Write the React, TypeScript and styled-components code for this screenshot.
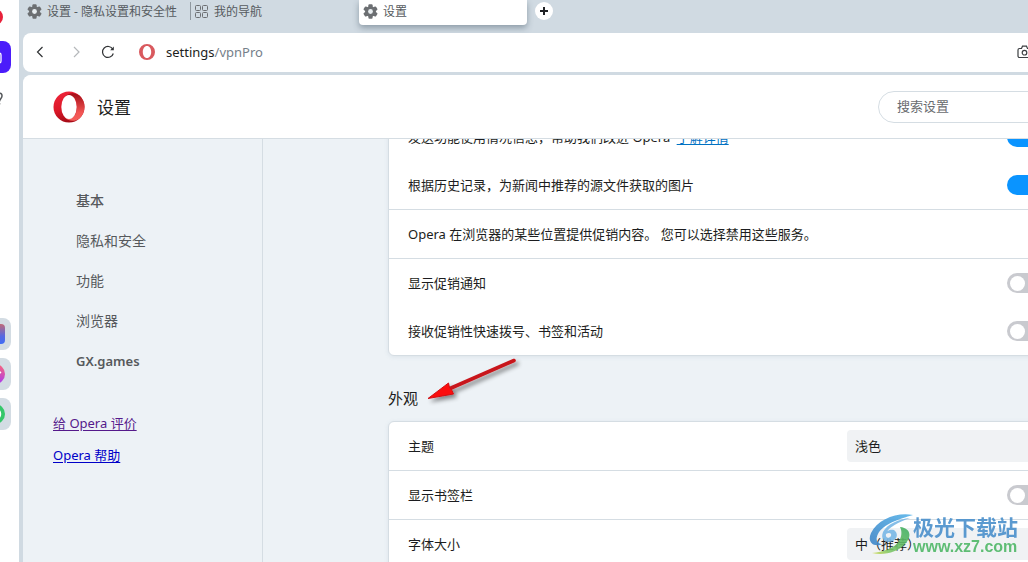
import React from "react";
import styled, { createGlobalStyle } from "styled-components";

const chrome = "#d0dae2";
const line = "#d5dde3";
const canvas = "#edf2f6";

const GlobalStyle = createGlobalStyle`
  *, *::before, *::after { box-sizing: border-box; }
  body {
    margin: 0;
    overflow: hidden;
    font-family: "Noto Sans", "Noto Sans CJK SC", sans-serif;
    font-size: 13px;
    line-height: 20px;
    color: #1c1d20;
  }
  button, input, select { font: inherit; color: inherit; }
  svg { display: block; flex: none; }
`;

const Shell = styled.div`
  display: flex;
  height: 100vh;
  background: ${chrome};
  overflow: hidden;
`;

const Rail = styled.nav`
  flex: none;
  width: 19px;
  padding: 1px 8px 0 0;
  background: #fff;
  overflow: hidden;
  display: flex;
  flex-direction: column;
  align-items: flex-end;
  gap: 8px;
`;

const RailApps = styled.div`
  display: flex;
  flex-direction: column;
  gap: 8px;
  margin-top: 197px;
`;

const RailButton = styled.button<{ $bg?: string }>`
  display: flex;
  align-items: center;
  justify-content: center;
  flex: none;
  width: 32px;
  height: 32px;
  padding: 0;
  border: 0;
  border-radius: 8px;
  background: ${(p) => p.$bg ?? "transparent"};
`;

const Frame = styled.div`
  flex: 1;
  min-width: 0;
  display: flex;
  flex-direction: column;
`;

const TabStrip = styled.div`
  flex: none;
  display: flex;
  height: 33px;
  padding-left: 4px;
`;

const Tab = styled.button<{ $active?: boolean }>`
  display: flex;
  align-items: center;
  flex: none;
  gap: 5px;
  width: 168px;
  height: 25px;
  padding: 0 4px 2px;
  border: 0;
  border-radius: 0 0 4px 4px;
  background: ${(p) => (p.$active ? "#fff" : "transparent")};
  box-shadow: ${(p) => (p.$active ? "0 3px 6px rgba(60, 80, 95, 0.45)" : "none")};
  color: #565b60;
  font-size: 12px;
  white-space: nowrap;
`;

const TabDivider = styled.span`
  flex: none;
  width: 1px;
  height: 18px;
  margin-top: 2px;
  margin-left: -1px;
  background: #8f989f;
`;

const NewTab = styled.button`
  display: flex;
  align-items: center;
  justify-content: center;
  width: 18px;
  height: 18px;
  margin: 2px 0 0 8px;
  padding: 0;
  border: 0;
  border-radius: 50%;
  background: #fff;
`;

const AddressBar = styled.div`
  flex: none;
  display: flex;
  align-items: center;
  height: 39px;
  margin: 0 -16px 3px 4px;
  padding: 0 11px 1px 8px;
  border-radius: 8px;
  background: #fff;
`;

const NavButtons = styled.div`
  display: flex;
  gap: 16px;
  margin-right: 16px;
`;

const IconButton = styled.button<{ $dim?: boolean }>`
  display: flex;
  align-items: center;
  justify-content: center;
  flex: none;
  width: 18px;
  height: 24px;
  padding: 0;
  border: 0;
  background: none;
  color: ${(p) => (p.$dim ? "#b5b8bb" : "#303235")};
`;

const Address = styled.div`
  flex: 1;
  padding-left: 11px;
  color: #1c1d20;
  span { color: #75808a; }
`;

const Page = styled.div`
  flex: 1;
  min-height: 0;
  display: flex;
  flex-direction: column;
  margin-left: 4px;
  border-radius: 8px 0 0 0;
  background: ${canvas};
  overflow: hidden;
`;

const Header = styled.header`
  flex: none;
  display: flex;
  align-items: center;
  height: 64px;
  padding-left: 30px;
  border-bottom: 1px solid ${line};
  background: #fff;
`;

const Title = styled.h1`
  flex: 1;
  margin: 0 0 0 12px;
  padding-top: 2px;
  font-size: 17px;
  line-height: 24px;
  font-weight: 400;
`;

const Search = styled.input`
  width: 196px;
  height: 32px;
  margin-right: -46px;
  padding: 0 18px 2px;
  border: 1px solid ${line};
  border-radius: 16px;
  background: #fff;
  outline: 0;
  &::placeholder { color: #6a6c70; opacity: 1; }
`;

const Body = styled.div`
  flex: 1;
  min-height: 0;
  display: flex;
`;

const Sidebar = styled.aside`
  flex: none;
  width: 240px;
  padding-top: 42px;
  border-right: 1px solid ${line};
`;

const NavList = styled.nav`
  display: flex;
  flex-direction: column;
  padding-left: 53px;
`;

const NavItem = styled.a<{ $latin?: boolean; $weight?: number }>`
  font-size: ${(p) => (p.$latin ? 13 : 14)}px;
  line-height: 40px;
  font-weight: ${(p) => p.$weight ?? 400};
  color: #56595c;
  text-decoration: none;
`;

const SideLinks = styled.div`
  display: flex;
  flex-direction: column;
  align-items: flex-start;
  margin-top: 26px;
  padding-left: 30px;
`;

const SideLink = styled.a<{ $visited?: boolean }>`
  line-height: 32px;
  color: ${(p) => (p.$visited ? "#551a8b" : "#0000c8")};
  text-underline-offset: 2px;
`;

const Viewport = styled.main`
  flex: 1;
  min-width: 0;
  overflow: hidden;
`;

const Scrolled = styled.div`
  margin: -27px -40px 0 125px;
`;

const Card = styled.section`
  border: 1px solid ${line};
  border-radius: 6px;
  background: #fff;
  box-shadow: 0 1px 4px rgba(120, 145, 165, 0.15);
`;

const Row = styled.div<{ $ruled?: boolean }>`
  display: flex;
  align-items: center;
  justify-content: space-between;
  height: ${(p) => (p.$ruled ? 49 : 48)}px;
  padding: 0 20px 0 19px;
  border-bottom: ${(p) => (p.$ruled ? `1px solid ${line}` : "0")};
  white-space: nowrap;
`;

const MoreLink = styled.a`
  margin-left: 3px;
  color: #0071c2;
  text-underline-offset: 2px;
`;

const SectionTitle = styled.h2`
  margin: 0;
  padding: 32px 0 12px;
  font-size: 15px;
  line-height: 21px;
  font-weight: 400;
`;

const Toggle = styled.input`
  appearance: none;
  flex: none;
  display: flex;
  align-items: center;
  width: 40px;
  height: 20px;
  margin: 0;
  padding: 0 3px;
  border-radius: 10px;
  background: #c9cacf;
  &::before {
    content: "";
    width: 15px;
    height: 15px;
    border-radius: 50%;
    background: #fff;
  }
  &:checked {
    justify-content: flex-end;
    background: #0a94ff;
  }
`;

const Select = styled.select`
  appearance: none;
  width: 200px;
  height: 32px;
  padding: 0 8px;
  border: 0;
  border-radius: 4px;
  background: #f0f2f4;
`;

const ArrowMark = styled.svg`
  position: absolute;
  left: 420px;
  top: 350px;
`;

const Watermark = styled.div`
  position: absolute;
  right: 10px;
  bottom: 6px;
  display: flex;
  align-items: center;
  opacity: 0.9;
`;

const WatermarkText = styled.div`
  display: flex;
  flex-direction: column;
`;

const WatermarkName = styled.span`
  font-family: "Noto Sans CJK SC", sans-serif;
  font-size: 21px;
  line-height: 24px;
  font-weight: 700;
  color: #4a90cc;
`;

const WatermarkSite = styled.span`
  font-family: "Liberation Sans", sans-serif;
  font-size: 16px;
  line-height: 18px;
  font-weight: 700;
  color: #50b868;
`;

const Gear = () => (
  <svg width="15" height="15" viewBox="0 0 15 15">
    <g fill="#6c6f72">
      {[0, 60, 120].map((a) => (
        <rect key={a} x="5.4" y="0.3" width="4.2" height="14.4" rx="1" transform={`rotate(${a} 7.5 7.5)`} />
      ))}
      <circle cx="7.5" cy="7.5" r="5.4" />
    </g>
    <circle cx="7.5" cy="7.5" r="2.4" fill="#e9eef1" />
  </svg>
);

const Grid = () => (
  <svg width="14" height="14" viewBox="0 0 14 14" fill="none" stroke="#6c6f72">
    {[1, 8].map((x) => [1, 8].map((y) => (
      <rect key={`${x}-${y}`} x={x - 0.5} y={y - 0.5} width="5" height="5" rx="1" />
    )))}
  </svg>
);

const OperaLogo = () => (
  <svg width="32" height="32" viewBox="0 0 32 32" aria-hidden="true">
    <defs>
      <linearGradient id="ring" x1="0" y1="0" x2="0.3" y2="1">
        <stop offset="0" stopColor="#f0263c" />
        <stop offset="0.6" stopColor="#dc1828" />
        <stop offset="1" stopColor="#a80c18" />
      </linearGradient>
      <linearGradient id="side" x1="0" y1="0" x2="0" y2="1">
        <stop offset="0" stopColor="#a20b15" />
        <stop offset="0.7" stopColor="#f25553" />
        <stop offset="1" stopColor="#f4605c" />
      </linearGradient>
    </defs>
    <circle cx="16" cy="16" r="15.500" fill="url(#ring)" />
    <path fill="url(#side)" d="M10.800 7C15 1 22 1 26.500 4.600A15.500 15.500 0 0 1 26.500 27.400C22 31 15 31 10.800 25C14 28.500 20 28 22.500 23C24.500 19 24.500 13 22.500 9C20 4 14 3.500 10.800 7z" />
    <ellipse cx="16" cy="16" rx="7.700" ry="12" fill="#fff" />
  </svg>
);

const ToggleRow = ({ id, label, on, ruled, link }: { id: string; label: string; on?: boolean; ruled?: boolean; link?: string }) => (
  <Row $ruled={ruled}>
    <span>
      <label htmlFor={id}>{label}</label>
      {link && <> <MoreLink href="#more">{link}</MoreLink></>}
    </span>
    <Toggle type="checkbox" id={id} defaultChecked={on} />
  </Row>
);

const SelectRow = ({ id, label, value, ruled }: { id: string; label: string; value: string; ruled?: boolean }) => (
  <Row $ruled={ruled}>
    <label htmlFor={id}>{label}</label>
    <Select id={id} defaultValue={value}>
      <option>{value}</option>
    </Select>
  </Row>
);

export default function App() {
  return (
    <>
      <GlobalStyle />
      <Shell>
        <Rail>
          <RailButton aria-label="Opera">
            <svg width="16" height="16" viewBox="0 0 16 16"><circle cx="8" cy="8" r="8" fill="#e8213a" /></svg>
          </RailButton>
          <RailButton $bg="#4b1cfa" aria-label="工作区">
            <svg width="14" height="14" viewBox="0 0 14 14" fill="none" stroke="#fff" strokeWidth="1.300"><rect x="1" y="3" width="12" height="10" rx="2" /></svg>
          </RailButton>
          <RailButton aria-label="工作区 2">
            <svg width="16" height="16" viewBox="0 0 16 16" fill="none" stroke="#55585b" strokeWidth="1.500"><path d="M10 6C10.500 3.500 15.200 3.500 15 7C15 9.500 12.500 10 12.500 12.500M12.500 14v1.600" /></svg>
          </RailButton>
          <RailApps>
            <RailButton $bg="#d3dce3" aria-label="Aria">
              <svg width="20" height="20" viewBox="0 0 20 20">
                <defs><linearGradient id="r1" x1="0" y1="0" x2="0" y2="1"><stop offset="0" stopColor="#c06a78" /><stop offset="0.6" stopColor="#5868e0" /><stop offset="1" stopColor="#3f6cf5" /></linearGradient></defs>
                <rect width="20" height="20" rx="4" fill="url(#r1)" />
              </svg>
            </RailButton>
            <RailButton $bg="#d3dce3" aria-label="Messenger">
              <svg width="20" height="20" viewBox="0 0 20 20">
                <defs><linearGradient id="r2" x1="1" y1="0" x2="0.700" y2="1"><stop offset="0" stopColor="#ff6a70" /><stop offset="1" stopColor="#a838f5" /></linearGradient></defs>
                <circle cx="10" cy="10" r="10" fill="url(#r2)" />
                <path d="M13 10l3-2" stroke="#fff" strokeWidth="1.600" fill="none" />
              </svg>
            </RailButton>
            <RailButton $bg="#d3dce3" aria-label="WhatsApp">
              <svg width="20" height="20" viewBox="0 0 20 20">
                <circle cx="10" cy="10" r="10" fill="#35c76a" />
                <circle cx="10" cy="10" r="5.600" fill="none" stroke="#fff" strokeWidth="1.300" />
              </svg>
            </RailButton>
          </RailApps>
        </Rail>

        <Frame>
          <TabStrip>
            <Tab><Gear />设置 - 隐私设置和安全性</Tab>
            <TabDivider />
            <Tab><Grid />我的导航</Tab>
            <Tab $active><Gear />设置</Tab>
            <NewTab aria-label="新标签页">
              <svg width="8" height="8" viewBox="0 0 8 8" stroke="#202225" strokeWidth="2"><path d="M4 0v8M0 4h8" /></svg>
            </NewTab>
          </TabStrip>

          <AddressBar>
            <NavButtons>
              <IconButton aria-label="后退">
                <svg width="12" height="12" viewBox="0 0 12 12" fill="none" stroke="currentColor" strokeWidth="1.200"><path d="M8.500 1L3.500 6l5 5" /></svg>
              </IconButton>
              <IconButton $dim aria-label="前进">
                <svg width="12" height="12" viewBox="0 0 12 12" fill="none" stroke="currentColor" strokeWidth="1.200"><path d="M6 1l5 5l-5 5" /></svg>
              </IconButton>
              <IconButton aria-label="刷新">
                <svg width="14" height="14" viewBox="0 0 14 14" fill="none" stroke="currentColor" strokeWidth="1.200"><path d="M12.300 8.500A5.500 5.500 0 1 1 11.800 4.200" /><path d="M12.800 1.600v3.600h-3.600z" fill="currentColor" stroke="none" /></svg>
              </IconButton>
            </NavButtons>
            <svg width="22" height="16" viewBox="0 0 22 16" aria-hidden="true">
              <path fill="#d9595e" fillRule="evenodd" d="M14 0a8 8 0 1 0 0 16a8 8 0 1 0 0-16zM14 2c2.500 0 4.200 2.700 4.200 6s-1.700 6-4.200 6s-4.200-2.700-4.200-6s1.700-6 4.200-6z" />
            </svg>
            <Address>settings<span>/vpnPro</span></Address>
            <svg width="16" height="14" viewBox="0 0 16 14" fill="none" stroke="#3c3f42" strokeWidth="1.200">
              <path d="M2.500 3.500h2l1-2.300h4l1 2.300h2a1.500 1.500 0 0 1 1.500 1.500v6a1.500 1.500 0 0 1-1.500 1.500h-10A1.500 1.500 0 0 1 1 11V5a1.500 1.500 0 0 1 1.500-1.500z" />
              <circle cx="7.500" cy="7.700" r="2.300" />
            </svg>
          </AddressBar>

          <Page>
            <Header>
              <OperaLogo />
              <Title>设置</Title>
              <Search type="search" placeholder="搜索设置" aria-label="搜索设置" />
            </Header>
            <Body>
              <Sidebar>
                <NavList>
                  <NavItem href="#basic" $weight={500}>基本</NavItem>
                  <NavItem href="#privacy">隐私和安全</NavItem>
                  <NavItem href="#features">功能</NavItem>
                  <NavItem href="#browser">浏览器</NavItem>
                  <NavItem href="#gx" $latin $weight={600}>GX.games</NavItem>
                </NavList>
                <SideLinks>
                  <SideLink href="#rate" $visited>给 Opera 评价</SideLink>
                  <SideLink href="#help">Opera 帮助</SideLink>
                </SideLinks>
              </Sidebar>
              <Viewport>
                <Scrolled>
                  <Card>
                    <ToggleRow id="usage" label="发送功能使用情况信息，帮助我们改进 Opera" link="了解详情" on />
                    <ToggleRow id="news" label="根据历史记录，为新闻中推荐的源文件获取的图片" on ruled />
                    <Row $ruled>Opera 在浏览器的某些位置提供促销内容。 您可以选择禁用这些服务。</Row>
                    <ToggleRow id="promo" label="显示促销通知" />
                    <ToggleRow id="dials" label="接收促销性快速拨号、书签和活动" />
                  </Card>
                  <SectionTitle>外观</SectionTitle>
                  <Card>
                    <SelectRow id="theme" label="主题" value="浅色" ruled />
                    <ToggleRow id="bookmarks" label="显示书签栏" ruled />
                    <SelectRow id="fontsize" label="字体大小" value="中（推荐）" ruled />
                  </Card>
                </Scrolled>
              </Viewport>
            </Body>
          </Page>
        </Frame>
      </Shell>

      <ArrowMark width="104" height="62" viewBox="0 0 104 62" aria-hidden="true">
        <defs>
          <filter id="drop" x="-20%" y="-20%" width="140%" height="150%">
            <feDropShadow dx="3" dy="3" stdDeviation="2" floodColor="#000" floodOpacity="0.45" />
          </filter>
        </defs>
        <g filter="url(#drop)">
          <path d="M94 10.500L30 38.500" stroke="#c8161b" strokeWidth="3.600" strokeLinecap="round" />
          <path d="M8 48.500L28.500 33L29.500 37.500L32 40.500L33.500 44z" fill="#fb0808" stroke="#d01216" strokeWidth="1" strokeLinejoin="round" />
        </g>
      </ArrowMark>

      <Watermark>
        <svg width="45" height="42" viewBox="0 0 45 42" aria-hidden="true">
          <defs>
            <linearGradient id="wb" x1="1" y1="0" x2="0" y2="1"><stop offset="0" stopColor="#58b4ea" /><stop offset="1" stopColor="#3d84c6" /></linearGradient>
            <linearGradient id="wg" x1="1" y1="0" x2="0" y2="1"><stop offset="0" stopColor="#3fae62" /><stop offset="0.700" stopColor="#7cc66a" /><stop offset="1" stopColor="#d5dc5a" /></linearGradient>
          </defs>
          <path fill="url(#wb)" d="M45 1C29-2 10 5 3 19C-1 28 5 34 15 30C9 30 7 26 10 20C15 10 31 5 45 1z" />
          <path fill="#79b8e6" d="M42 4C31 5 19 10 15 18C12 26 18 30 25 27C30 24 30 19 26 16C22 15 18 17 18 20C21 18 24 19 23 22C21 25 17 24 18 20C20 13 31 8 42 4z" />
          <path fill="url(#wg)" d="M32 13C43 14 44 23 37 30C30 38 16 42 4 39C15 38 27 34 31 27C34 22 34 17 32 13z" />
        </svg>
        <WatermarkText>
          <WatermarkName>极光下载站</WatermarkName>
          <WatermarkSite>www.xz7.com</WatermarkSite>
        </WatermarkText>
      </Watermark>
    </>
  );
}
